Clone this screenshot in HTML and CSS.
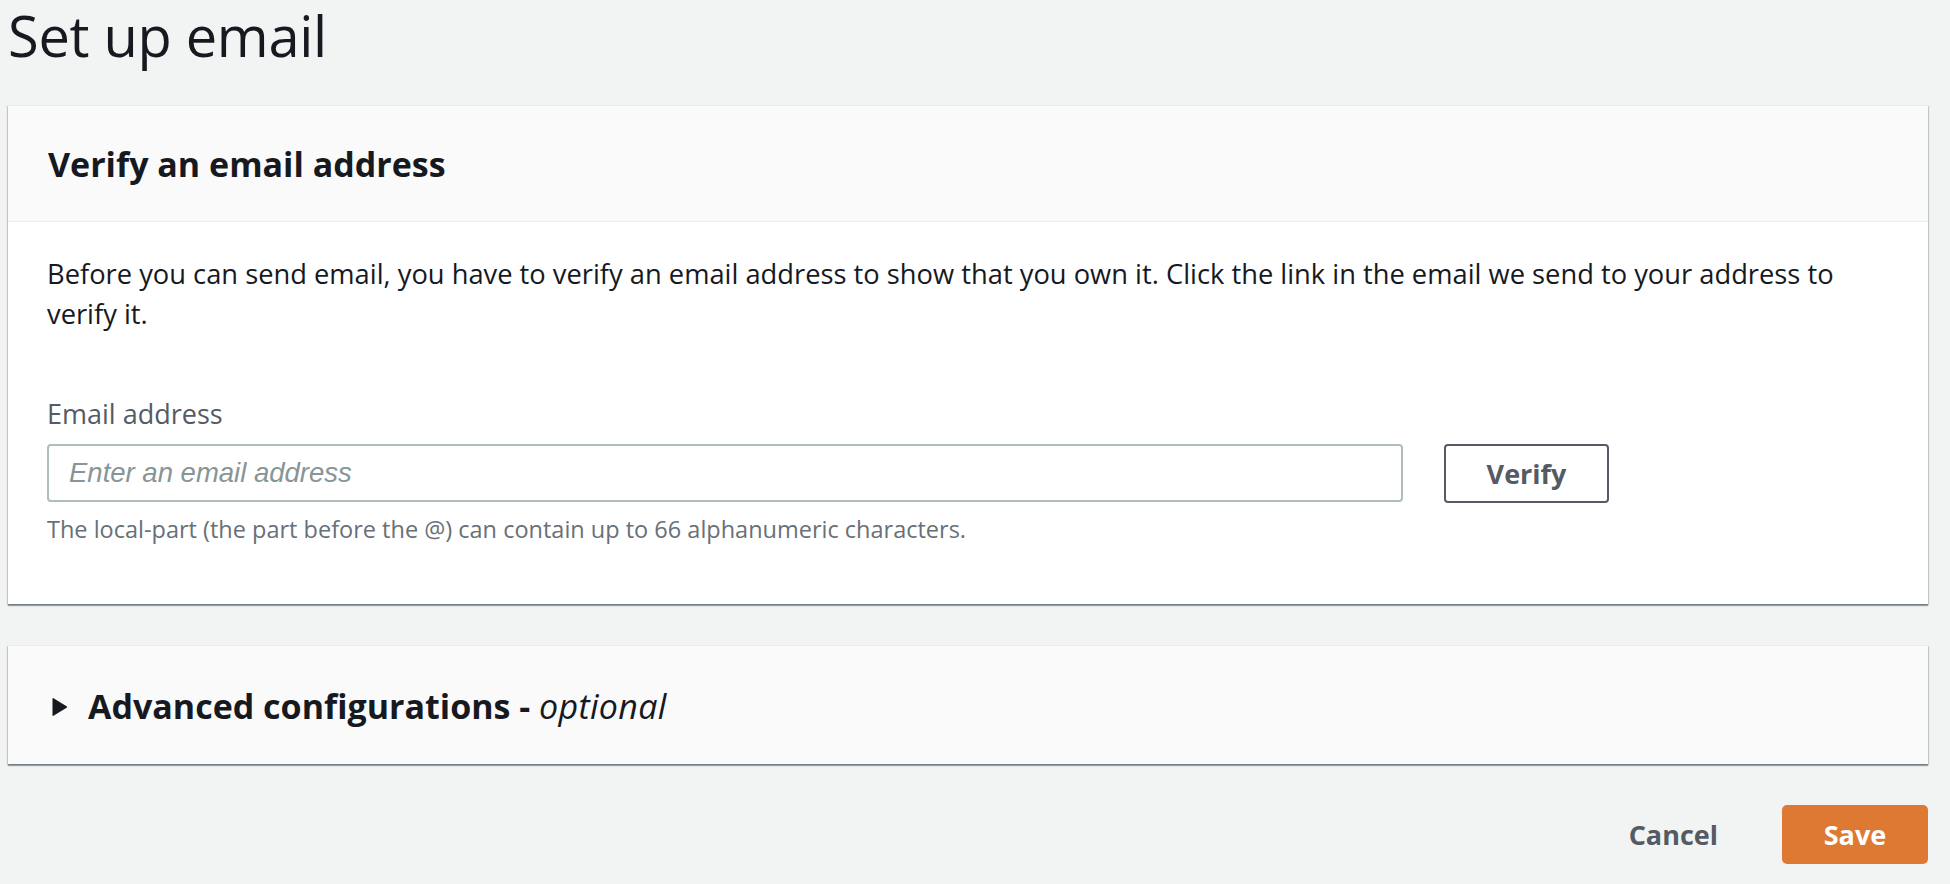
FILE: index.html
```html
<!DOCTYPE html>
<html lang="en">
<head>
<meta charset="utf-8">
<title>Set up email</title>
<link rel="stylesheet" href="styles.css">
</head>
<body>
<main class="page">
  <h1 class="page-title">Set up email</h1>

  <section class="card">
    <header class="card-header">
      <h2 class="card-title">Verify an email address</h2>
    </header>
    <div class="card-body">
      <p class="desc">Before you can send email, you have to verify an email address to show that you own it. Click the link in the email we send to your address to verify it.</p>
      <div class="field">
        <label class="field-label" for="email">Email address</label>
        <div class="field-row">
          <input class="text-input" id="email" type="text" placeholder="Enter an email address">
          <button class="btn btn-normal" type="button">Verify</button>
        </div>
        <p class="hint">The local-part (the part before the @) can contain up to 66 alphanumeric characters.</p>
      </div>
    </div>
  </section>

  <section class="card">
    <div class="expander">
      <svg class="caret" width="16" height="20" viewBox="0 0 16 20" aria-hidden="true"><path d="M1.5 1.2 L14.6 9.2 Q15.8 10 14.6 10.8 L1.5 18.8 Q0.5 19.3 0.5 18.2 L0.5 1.8 Q0.5 0.7 1.5 1.2 Z" fill="#16191f"/></svg>
      <h2 class="card-title">Advanced configurations - <i class="optional">optional</i></h2>
    </div>
  </section>

  <div class="actions">
    <button class="btn btn-link" type="button">Cancel</button>
    <button class="btn btn-primary" type="button">Save</button>
  </div>
</main>
</body>
</html>
```

FILE: styles.css
```css
html, body {
  margin: 0;
  padding: 0;
  background: #f2f3f3;
}

body {
  font-family: "Open Sans", "Noto Sans", sans-serif;
  color: #16191f;
}

.page {
  padding: 6px 22px 0 8px;
  display: flex;
  flex-direction: column;
}

.page-title {
  margin: 0 0 40px 0;
  font-size: 56px;
  line-height: 59px;
  font-weight: 400;
  letter-spacing: -0.3px;
  color: #16191f;
}

.card {
  background: #ffffff;
  border-top: 1px solid #eaeded;
  box-shadow: 0 2px 1px 0 rgba(0, 28, 36, 0.35), 1px 1px 1px 0 rgba(0, 28, 36, 0.15), -1px 1px 1px 0 rgba(0, 28, 36, 0.15);
  margin-bottom: 41px;
}

.card-header {
  background: #fafafa;
  padding: 36px 40px 35px 40px;
  border-bottom: 1px solid #eaeded;
}

.card-title {
  margin: 0;
  font-size: 34px;
  line-height: 44px;
  font-weight: 700;
  color: #16191f;
}

.optional {
  font-weight: 400;
  font-style: italic;
  letter-spacing: 0.3px;
}

.card-body {
  padding: 32px 40px 59px 39px;
}

.desc {
  margin: 0;
  font-size: 27.3px;
  line-height: 40px;
  color: #16191f;
}

.field {
  margin-top: 60px;
  display: flex;
  flex-direction: column;
}

.field-label {
  font-size: 27px;
  line-height: 40px;
  color: #545b64;
}

.field-row {
  margin-top: 10px;
  display: flex;
  gap: 41px;
}

.text-input {
  box-sizing: border-box;
  width: 1356px;
  height: 58px;
  margin: 0;
  padding: 0 20px;
  border: 2px solid #b0bcbd;
  border-radius: 4px;
  background: #fff;
  font-family: "Liberation Sans", Arial, sans-serif;
  font-size: 27.5px;
  color: #16191f;
}

.text-input::placeholder {
  color: #879596;
  font-style: italic;
}

.btn {
  font-family: "Open Sans", "Noto Sans", sans-serif;
  font-weight: 700;
  cursor: pointer;
  margin: 0;
}

.btn-normal {
  box-sizing: border-box;
  width: 165px;
  height: 59px;
  background: #fff;
  border: 2px solid #545b64;
  border-radius: 4px;
  color: #545b64;
  font-size: 27px;
  padding: 0;
}

.hint {
  margin: 10px 0 0 0;
  font-size: 23.5px;
  line-height: 32px;
  color: #687078;
}

.expander {
  background: #fafafa;
  padding: 38px 40px 36px 44px;
  display: flex;
  align-items: center;
  gap: 20px;
}

.caret {
  flex: none;
  margin-top: 2px;
}

.actions {
  display: flex;
  justify-content: flex-end;
  align-items: center;
  gap: 26px;
}

.btn-link {
  background: transparent;
  border: none;
  color: #545b64;
  font-size: 27px;
  padding: 0 38px;
  height: 59px;
}

.btn-primary {
  box-sizing: border-box;
  width: 146px;
  height: 59px;
  background: #de7934;
  border: none;
  border-radius: 5px;
  color: #ffffff;
  font-size: 27px;
  padding: 0;
}
```
